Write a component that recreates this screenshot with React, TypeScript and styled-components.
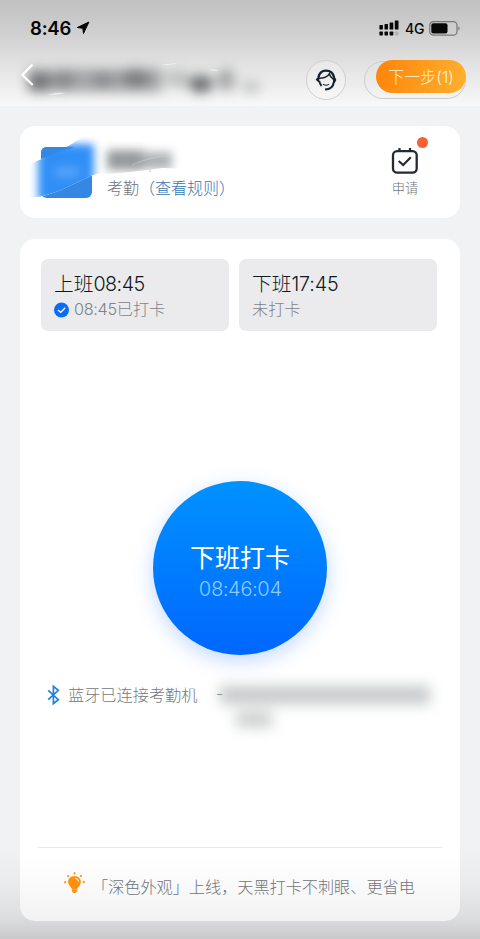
import React from 'react';
import styled, { createGlobalStyle } from 'styled-components';

const GlobalStyle = createGlobalStyle`
  * { box-sizing: border-box; }
  html, body { margin: 0; padding: 0; }
  body {
    font-family: Inter, "Noto Sans CJK SC", sans-serif;
    font-weight: 300;
    background: #eff1f4;
    overflow: hidden;
  }
`;

const Screen = styled.main`
  width: 480px;
  height: 939px;
  display: flex;
  flex-direction: column;
  background: linear-gradient(#f0f2f4 0, #f0f2f4 845px, #e9ebed 885px, #dcddde 918px, #c9c9cb 939px);
`;

const Header = styled.header`
  height: 106px;
  flex: none;
  background: linear-gradient(#c1c1c1 0, #cecece 30px, #e2e2e2 64px, #f8f8f8 106px);
`;

const StatusBar = styled.div`
  height: 56px;
  padding: 0 19px 0 30px;
  display: flex;
  align-items: center;
  color: #050505;
`;

const Clock = styled.span`
  font-size: 18.5px;
  line-height: 24px;
  font-weight: 600;
  letter-spacing: -0.2px;
  width: 46px;
  white-space: nowrap;
`;

const StatusIcons = styled.div`
  margin-left: auto;
  display: flex;
  align-items: center;
`;

const Network = styled.span`
  margin: 1px 5px 0 6px;
  width: 19px;
  font-size: 14px;
  line-height: 18px;
  font-weight: 500;
  letter-spacing: -0.2px;
`;

const NavBar = styled.nav`
  height: 50px;
  padding: 0 14px 0 20px;
  display: flex;
  align-items: center;
`;

const BackButton = styled.button`
  border: 0;
  padding: 0;
  width: 15px;
  height: 24px;
  margin-top: -13px;
  background: none;
  z-index: 1;
`;

const HiddenTitle = styled.div`
  width: 246px;
  height: 50px;
  margin-left: -8px;
  svg { display: block; overflow: visible; }
`;

const RoundButton = styled.button`
  width: 40px;
  height: 40px;
  flex: none;
  margin-left: 33px;
  margin-top: -2px;
  padding: 0;
  border: 1px solid #cfcfcf;
  border-radius: 50%;
  background: rgba(255, 255, 255, 0.25);
  display: grid;
  place-items: center;
`;

const Capsule = styled.div`
  width: 102px;
  height: 38px;
  flex: none;
  margin: -2px 0 0 18px;
  border: 1px solid #cdcdcd;
  border-radius: 20px;
  position: relative;
`;

const NextButton = styled.button`
  position: absolute;
  top: -2px;
  right: -1px;
  width: 90px;
  height: 33px;
  padding: 0;
  border: 0;
  border-radius: 17px;
  background: linear-gradient(100deg, #ff840a, #ffb02f);
  color: #fff5df;
  font: 300 16px/32px Inter, "Noto Sans CJK SC", sans-serif;
  letter-spacing: 0.05px;
  white-space: nowrap;
`;

const Content = styled.div`
  padding: 20px 20px 18px;
  display: flex;
  flex-direction: column;
  gap: 21px;
  flex: 1;
`;

const Card = styled.section`
  background: #fff;
  border-radius: 15px;
`;

const ProfileCard = styled(Card)`
  height: 92px;
  flex: none;
  display: flex;
  align-items: flex-start;
  padding: 21px 40px 0 21px;
`;

const Avatar = styled.div`
  width: 52px;
  height: 52px;
  flex: none;
  svg { display: block; overflow: visible; }
`;

const ProfileText = styled.div`
  margin-left: 14px;
  display: flex;
  flex-direction: column;
`;

const HiddenName = styled.div`
  height: 29px;
  svg { display: block; overflow: visible; }
`;

const GroupLine = styled.div`
  position: relative;
  font-size: 16px;
  line-height: 24px;
  color: #6f7479;
  white-space: nowrap;
`;

const RuleLink = styled.span`
  color: #2f76b5;
`;

const ApplyButton = styled.div`
  margin: -2px 0 0 auto;
  width: 30px;
  display: flex;
  flex-direction: column;
  align-items: center;
  position: relative;
  font-size: 13.3px;
  line-height: 20px;
  color: #70757a;
  white-space: nowrap;
  svg { margin: 2px 0 3px; }
`;

const RedDot = styled.i`
  position: absolute;
  top: -8px;
  right: -8px;
  width: 11px;
  height: 11px;
  border-radius: 50%;
  background: #fb6030;
`;

const PunchCard = styled(Card)`
  flex: 1;
  padding: 20px 18px 0;
  display: flex;
  flex-direction: column;
  background: linear-gradient(#fff 618px, #f9f9f9 650px, #f2f2f2 100%);
`;

const Shifts = styled.div`
  padding: 0 5px 0 3px;
  display: grid;
  grid-template-columns: 188px 198px;
  gap: 10px;
`;

const Shift = styled.div`
  height: 72px;
  border-radius: 7px;
  background: #ebebed;
  padding: 11px 13px;
`;

const ShiftTitle = styled.div`
  font-size: 19.7px;
  line-height: 28px;
  color: #111821;
  white-space: nowrap;
`;

const ShiftState = styled.div`
  display: flex;
  align-items: center;
  font-size: 16.2px;
  line-height: 23px;
  color: #7e8389;
  white-space: nowrap;
  svg { margin-right: 5px; }
`;

const Digits = styled.span<{ $gap: number }>`
  letter-spacing: ${(p) => p.$gap}px;
`;

const PunchButton = styled.button`
  width: 174px;
  height: 174px;
  flex: none;
  margin: 149.5px 0 0 115px;
  padding: 7px 0 0;
  border: 0;
  border-radius: 50%;
  background: linear-gradient(#0092ff, #0067ff);
  box-shadow: 0 6px 20px rgba(38, 116, 255, 0.27);
  display: flex;
  flex-direction: column;
  align-items: center;
  justify-content: center;
  font-family: Inter, "Noto Sans CJK SC", sans-serif;
`;

const PunchTitle = styled.span`
  font-size: 25px;
  line-height: 35px;
  font-weight: 400;
  color: #fff;
  white-space: nowrap;
`;

const PunchTime = styled.span`
  font-size: 20px;
  line-height: 26px;
  font-weight: 300;
  letter-spacing: -0.65px;
  color: #91c8ff;
  font-variant-numeric: tabular-nums;
`;

const DeviceLine = styled.div`
  height: 24px;
  margin-top: 28.5px;
  padding-left: 9px;
  display: flex;
  align-items: center;
  font-size: 16.2px;
  line-height: 24px;
  color: #75797d;
  white-space: nowrap;
  svg { flex: none; overflow: visible; }
`;

const DeviceText = styled.span`
  margin-left: 8px;
  width: 130px;
`;

const Dash = styled.span`
  margin: -2px 0 0 18px;
  width: 6px;
`;

const Notice = styled.footer`
  margin-top: auto;
  height: 74px;
  border-top: 1px solid #e7e8ea;
  display: flex;
  align-items: center;
  padding: 4px 0 0 26px;
  font-size: 16.15px;
  line-height: 24px;
  color: #70757a;
  white-space: nowrap;
  svg { flex: none; margin: -8px 7px 0 0; }
`;

const SignalIcon = () => (
  <svg width="20" height="16" viewBox="0 0 20 16" fill="#080808">
    <rect x="0.4" y="5" width="3.5" height="4.6" rx="0.7" />
    <rect x="5.5" y="4" width="3.5" height="5.6" rx="0.7" />
    <rect x="10.6" y="2.4" width="3.7" height="7.2" rx="0.7" />
    <rect x="15.8" y="0.4" width="3.7" height="9.2" rx="0.7" />
    <rect x="0.4" y="11.6" width="3.5" height="3.9" rx="0.7" />
    <rect x="5.5" y="11.6" width="3.5" height="3.9" rx="0.7" />
    <rect x="10.6" y="11.6" width="3.7" height="3.9" rx="0.7" />
    <rect x="15.8" y="11.6" width="3.7" height="3.9" rx="0.7" fill="#b4b4b4" />
  </svg>
);

const BatteryIcon = () => (
  <svg width="32" height="15" viewBox="0 0 32 15">
    <rect x="0.7" y="0.7" width="27.3" height="13.4" rx="3.7" fill="none" stroke="#777" strokeWidth="1.2" />
    <rect x="2.3" y="2.3" width="16.2" height="10.2" rx="2" fill="#080808" />
    <path d="M29.4 5.2C31.1 5.9 31.1 8.9 29.4 9.6Z" fill="#777" />
  </svg>
);

const AgentIcon = () => (
  <svg width="22" height="22" viewBox="0 0 22 22" fill="none">
    <path d="M3.4 8.4C4.3 3.8 7.3 1.6 11 1.6C15.3 1.6 18.2 4.1 19 8.4" stroke="#17222f" strokeWidth="2.4" />
    <path d="M4.2 7.2Q.5 9.8.8 10.8Q1.2 12 4.5 13.8Z" fill="#17222f" />
    <path d="M18 6.6Q21.3 9.2 21.3 11Q21 13.3 18 14.8Z" fill="#17222f" />
    <path d="M3.8 9.3C8.9 9.2 12.7 7.7 14.3 4.8C15 7.6 16.6 9.2 18.5 10.5" stroke="#17222f" strokeWidth="1.5" />
    <path d="M4.3 12Q4.8 15.2 6.6 17" stroke="#17222f" strokeWidth="1.8" />
    <path d="M18.9 12.9Q17.9 20.4 10 20.5" stroke="#17222f" strokeWidth="2.1" />
    <path d="M8 15.1Q11 17.4 14.1 15.1" stroke="#17222f" strokeWidth="1.1" />
  </svg>
);

const CalendarIcon = () => (
  <svg width="28" height="28" viewBox="0 0 28 28" fill="none">
    <rect x="2" y="4.1" width="23.7" height="21.5" rx="4.1" stroke="#252a32" strokeWidth="2.3" />
    <path d="M8.5 1V4M19 1V4" stroke="#252a32" strokeWidth="2.2" />
    <path d="M7.7 14L12.2 18.1L19.8 10.2" stroke="#252a32" strokeWidth="2.1" />
  </svg>
);

const BulbIcon = () => (
  <svg width="21" height="22" viewBox="0 0 21 22" fill="#ff900d">
    <path d="M10.5 3.9C6.5 3.9 4.1 6.8 4.1 10.1C4.1 12.7 6.2 14.5 7.8 16.5V18.9L9.4 21H11.6L13.2 18.9V16.5C14.8 14.5 16.9 12.7 16.9 10.1C16.9 6.8 14.5 3.9 10.5 3.9Z" />
    <path d="M11.4 6.3Q14.2 6.8 14.6 9.7" fill="none" stroke="#ffe8c5" strokeWidth="1.1" />
    <path d="M7.8 17.6H13.2" stroke="#ffb65f" strokeWidth=".7" />
    <circle cx="10.5" cy="1.4" r="1.1" /><circle cx="4.1" cy="4" r="1.1" />
    <circle cx="16.9" cy="4" r="1.1" /><circle cx="1.2" cy="10.2" r="1.1" />
    <circle cx="19.8" cy="10.2" r="1.1" />
  </svg>
);

export default function App() {
  return (
    <>
      <GlobalStyle />
      <Screen>
        <Header>
          <StatusBar>
            <Clock>8:46</Clock>
            <svg width="14" height="14" viewBox="0 0 14 14"><path d="M12.9 1L1.3 6.5L6.8 7.3L7.5 12.5Z" fill="#050505" stroke="#050505" strokeWidth="1" strokeLinejoin="round" /></svg>
            <StatusIcons><SignalIcon /><Network>4G</Network><BatteryIcon /></StatusIcons>
          </StatusBar>
          <NavBar>
            <BackButton aria-label="返回">
              <svg width="15" height="24" viewBox="0 0 15 24"><path d="M12.5 1.5L2.4 12L12.7 22" fill="none" stroke="#fff" strokeWidth="2.2" /></svg>
            </BackButton>
            <HiddenTitle>
              <svg width="246" height="50" viewBox="0 0 246 50">
                <defs><filter id="titleBlur" filterUnits="userSpaceOnUse" x="-25" y="-20" width="290" height="90" colorInterpolationFilters="sRGB"><feGaussianBlur stdDeviation="6" /></filter></defs>
                <g filter="url(#titleBlur)" fill="#5f6265">
                  <rect x="2" y="13" width="133" height="23" opacity=".5" />
                  <ellipse cx="12" cy="26" rx="12" ry="10" opacity=".7" />
                  <ellipse cx="37" cy="24" rx="10" ry="10" opacity=".4" />
                  <ellipse cx="76" cy="24" rx="11" ry="8" opacity=".35" />
                  <ellipse cx="109" cy="22" rx="14" ry="10" opacity=".55" />
                  <ellipse cx="151" cy="23" rx="13" ry="9" opacity=".3" />
                  <ellipse cx="174" cy="28" rx="12" ry="9" opacity=".9" />
                  <ellipse cx="199" cy="24" rx="9" ry="11" opacity=".5" />
                  <ellipse cx="224" cy="31" rx="10" ry="6" opacity=".3" />
                </g>
                <path d="M133 9Q142 7 151 7.5Q142 9 133 9ZM181 14Q187 13 192 14.5Q187 15 181 14ZM21 39Q30 36 39 37Q30 39 21 39Z" fill="#fafafa" opacity=".8" />
              </svg>
            </HiddenTitle>
            <RoundButton aria-label="客服"><AgentIcon /></RoundButton>
            <Capsule><NextButton>下一步(1)</NextButton></Capsule>
          </NavBar>
        </Header>

        <Content>
          <ProfileCard>
            <Avatar>
              <svg width="52" height="52" viewBox="0 0 52 52">
                <defs>
                  <filter id="avatarBlur" filterUnits="userSpaceOnUse" x="-25" y="-25" width="100" height="100" colorInterpolationFilters="sRGB"><feGaussianBlur stdDeviation="4.5" /></filter>
                  <clipPath id="smear"><path d="M-14 18Q16 7 42 -10L70 -12V23L52 28L20 43Q4 50 -14 51Z" /></clipPath>
                </defs>
                <rect width="51" height="51" rx="6" fill="#3487e2" />
                <path d="M-12 15Q20 7 44 -8L64 -8V25L52 28L20 43Q4 50 -12 51Z" fill="#fff" />
                <path d="M0 12Q18 7 33 0H6Q0 0 0 6Z" fill="#3487e2" />
                <g clipPath="url(#smear)"><rect x="-3" y="-3" width="56" height="58" rx="3" fill="#308ff7" filter="url(#avatarBlur)" /></g>
                <ellipse cx="26" cy="25" rx="14" ry="6" fill="#78b6fb" opacity=".5" filter="url(#avatarBlur)" />
              </svg>
            </Avatar>
            <ProfileText>
              <HiddenName>
                <svg width="70" height="29" viewBox="0 0 70 29">
                  <defs><filter id="nameBlur" filterUnits="userSpaceOnUse" x="-20" y="-20" width="110" height="70" colorInterpolationFilters="sRGB"><feGaussianBlur stdDeviation="5" /></filter></defs>
                  <g filter="url(#nameBlur)"><rect x="0" y="3" width="37" height="20" fill="#969a9c" /><rect x="34" y="5" width="31" height="17" fill="#aeb1b3" /></g>
                  <path d="M-12 28Q29 25 55 21L91 22V31H-12Z" fill="#fff" />
                  <path d="M25 18Q45 9 62 9" fill="none" stroke="#d2d5d6" opacity=".5" />
                  <circle cx="43" cy="24" r=".6" fill="#777" />
                </svg>
              </HiddenName>
              <GroupLine>考勤<RuleLink>（查看规则）</RuleLink></GroupLine>
            </ProfileText>
            <ApplyButton><CalendarIcon /><RedDot />申请</ApplyButton>
          </ProfileCard>

          <PunchCard>
            <Shifts>
              <Shift>
                <ShiftTitle>上班<Digits $gap={-0.5}>08:45</Digits></ShiftTitle>
                <ShiftState>
                  <svg width="15" height="16" viewBox="0 0 15 16"><circle cx="7.5" cy="8" r="7.5" fill="#096cf8" /><path d="M4 8L6.7 10.4L11.2 5.8" fill="none" stroke="#fff" strokeWidth="1.4" /></svg>
                  <Digits $gap={-0.3}>08:45</Digits>已打卡
                </ShiftState>
              </Shift>
              <Shift>
                <ShiftTitle>下班<Digits $gap={-0.1}>17:45</Digits></ShiftTitle>
                <ShiftState>未打卡</ShiftState>
              </Shift>
            </Shifts>
            <PunchButton>
              <PunchTitle>下班打卡</PunchTitle>
              <PunchTime>08:46:04</PunchTime>
            </PunchButton>
            <DeviceLine>
              <svg width="13" height="20" viewBox="0 0 13 20"><path d="M1.2 5.3L11.3 14.6L6.4 18.7V1.3L11.3 5.4L1.2 14.7" fill="none" stroke="#267fdb" strokeWidth="1.7" /></svg>
              <DeviceText>蓝牙已连接考勤机</DeviceText>
              <Dash>-</Dash>
              <svg width="220" height="24" viewBox="0 0 220 24">
                <defs><filter id="deviceBlur" filterUnits="userSpaceOnUse" x="-40" y="-30" width="290" height="100" colorInterpolationFilters="sRGB"><feGaussianBlur stdDeviation="7" /></filter></defs>
                <g filter="url(#deviceBlur)"><rect x="-2" y="3" width="210" height="18" fill="#bfc3c3" opacity=".9" /><rect x="14" y="29" width="36" height="15" fill="#c3c7c7" opacity=".9" /></g>
                <path d="M-76 -1Q-55 6 -20 4L-15 6Q-48 6 -76 3Z" fill="#fff" opacity=".7" />
              </svg>
            </DeviceLine>
            <Notice><BulbIcon /><span>「深色外观」上线，天黑打卡不刺眼、更省电</span></Notice>
          </PunchCard>
        </Content>
      </Screen>
    </>
  );
}
